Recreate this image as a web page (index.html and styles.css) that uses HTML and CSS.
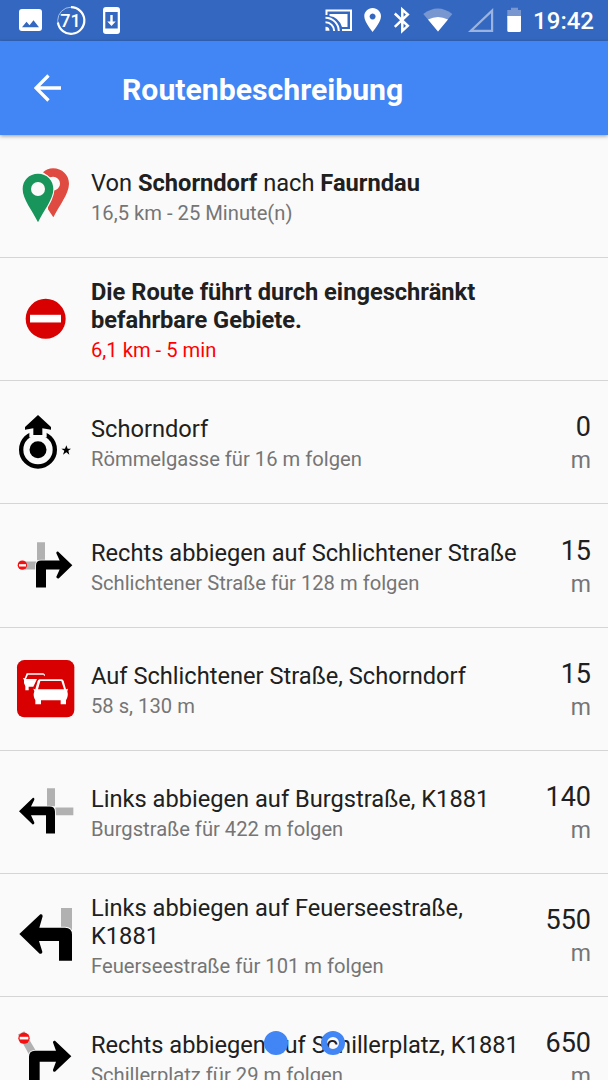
FILE: index.html
```html
<!DOCTYPE html>
<html lang="de">
<head>
<meta charset="utf-8">
<title>Routenbeschreibung</title>
<link rel="stylesheet" href="styles.css">
</head>
<body>
<div class="screen">
  <header class="statusbar">
    <svg class="status-icons" viewBox="0 0 130 41">
      <path fill="#fff" fill-rule="evenodd" d="M22 9h17q3 0 3 3v16q0 3-3 3H22q-3 0-3-3V12q0-3 3-3zM22 27.300h17l-5.500-7-4 5-3-3.500z"/>
      <circle cx="71" cy="20.500" r="13.300" fill="none" stroke="#a5bee6" stroke-width="1"/>
      <path fill="none" stroke="#fff" stroke-width="2.200" d="M71 7.200A13.300 13.300 0 1 1 57.900 22.500"/>
      <text class="status-count" x="70.500" y="27" text-anchor="middle">71</text>
      <path fill="#fff" fill-rule="evenodd" d="M106 7h11q3 0 3 3v21q0 3-3 3h-11q-3 0-3-3V10q0-3 3-3zM105.300 12v16.500h12.400V12zM110.300 15h2.400v6.500h3l-4.200 4.500-4.200-4.500h3z"/>
    </svg>
    <div class="status-right">
      <svg class="status-icons" viewBox="304 0 226 41">
        <g fill="none" stroke="#fff" stroke-width="2">
          <path d="M326.500 15v-4.500h24.500v19.500h-9"/>
          <path d="M325.500 17.700a13.500 13.500 0 0 1 13.300 13.300M325.500 22.300a8.700 8.700 0 0 1 8.700 8.700"/>
        </g>
        <path fill="#fff" d="M329.500 14h18v13h-5.500q-3.500-10-12.500-11zM325.500 26.800a4 4 0 0 1 4 4h-4z"/>
        <path fill="#fff" fill-rule="evenodd" d="M372.600 8c4.800 0 8.400 3.700 8.400 8.300 0 6-8.400 15.700-8.400 15.700s-8.300-9.700-8.300-15.700c0-4.600 3.600-8.300 8.300-8.300zM372.600 13.400a3 3 0 1 0 .01 0z"/>
        <path fill="none" stroke="#fff" stroke-width="2.500" d="M394.800 13.500l13 12.300-5.500 5V9.500l5.500 5-13 12.300"/>
        <path fill="#7897d1" d="M423.300 14q14.500-11 29 0L438 31.500z"/>
        <path fill="#fff" d="M428 19.500q10-5 20 0L438 31.500z"/>
        <path fill="#9ab3e0" fill-rule="evenodd" d="M493.200 8v24H468zM491 13.200l-17.500 16.600h17.500z"/>
        <path fill="#7897d1" d="M507.300 10h3.700V7.800h7V10h3v8h-13.700z"/>
        <path fill="#fff" d="M507.300 16H521v14.500q0 1.500-1.500 1.500h-10.700q-1.500 0-1.500-1.500z"/>
      </svg>
      <span class="clock">19:42</span>
    </div>
  </header>
  <div class="appbar">
    <svg class="back" viewBox="0 0 28 28"><path d="M27 14H2.500M14.500 1.500L2 14l12.500 12.500"/></svg>
    <h1 class="heading">Routenbeschreibung</h1>
  </div>
  <main class="list">
    <section class="row">
      <svg class="icon" viewBox="0 -45 273 366">
        <path fill="#e04b41" fill-rule="evenodd" d="M159 55c27 0 48 20 48 46 0 30-29 65-47 101l-16-24 0-100-15-11q13-12 30-12zM159 80a21 21 0 1 0 .1 42a21 21 0 0 0 0-42z"/>
        <path fill="#18955a" stroke="#fafafa" stroke-width="7" paint-order="stroke" d="M114 71c-27 0-46 20-46 46 0 31 28 63 46 100 18-37 46-69 46-100 0-26-19-46-46-46z"/>
        <circle cx="114" cy="117" r="21" fill="#fafafa"/>
      </svg>
      <div class="text"><div class="title">Von <b>Schorndorf</b> nach <b>Faurndau</b></div><div class="detail">16,5 km - 25 Minute(n)</div></div>
    </section>
    <section class="row">
      <svg class="icon" viewBox="0 324.600 273 366">
        <circle cx="137" cy="507" r="60" fill="#d80000"/><path fill="#fff" d="M90 495h93v23H90z"/>
      </svg>
      <div class="text"><div class="title"><b>Die Route führt durch eingeschränkt befahrbare Gebiete.</b></div><div class="detail warning">6,1 km - 5 min</div></div>
    </section>
    <section class="row">
      <svg class="icon" viewBox="0 -56 273 366">
        <circle cx="114" cy="150" r="50.500" fill="none" stroke="#000" stroke-width="13"/>
        <path fill="#fafafa" d="M88 86h52v27H88z"/>
        <circle cx="114" cy="150" r="25.500"/>
        <path d="M114 46l39 36v8l-26-4v20h-27V86l-25 4v-8z"/>
        <path d="M199 137l4 10h10l-8 6 3 12-9-7-10 7 4-12-9-6h11z"/>
      </svg>
      <div class="text"><div class="title">Schorndorf</div><div class="detail">Römmelgasse für 16 m folgen</div></div>
      <div class="distance"><div class="value">0</div><div class="unit">m</div></div>
    </section>
    <section class="row">
      <svg class="icon" viewBox="0 -61.500 273 366">
        <path fill="#b1b1b1" d="M111 50h24v54h-24zM75 108h34v24H75z"/>
        <path stroke="#fafafa" stroke-width="5" paint-order="stroke" d="M108 186v-66q0-15 15-15h56l-10-22q-1-6 5-5l43 41-41 40q-7 1-7-5l10-22h-41v54z"/>
        <circle cx="67" cy="119" r="14" fill="#f41010"/><path fill="#fff" d="M57 116h21v7H57z"/>
      </svg>
      <div class="text"><div class="title">Rechts abbiegen auf Schlichtener Straße</div><div class="detail">Schlichtener Straße für 128 m folgen</div></div>
      <div class="distance"><div class="value">15</div><div class="unit">m</div></div>
    </section>
    <section class="row">
      <svg class="icon" viewBox="0 -52 273 366">
        <rect x="51" y="44" width="172" height="172" rx="22" fill="#d80000"/>
        <path fill="#fff" fill-rule="evenodd" d="M80 84h50q6 2 5 9l-4-3v-2H84l-6 13h33l-11 23H86v11H76v-12q-6-8-4-19l-3-6 5 1z"/>
        <path fill="#fff" fill-rule="evenodd" d="M119 102h66q4 0 6 5l7 25 6-2-2 8q4 14-4 27v12h-16v-12h-59v12h-17v-12q-8-13-3-27l-3-8 6 2 7-25q2-5 6-5zM121 107l-7 25h78l-8-25z"/>
      </svg>
      <div class="text"><div class="title">Auf Schlichtener Straße, Schorndorf</div><div class="detail">58 s, 130 m</div></div>
      <div class="distance"><div class="value">15</div><div class="unit">m</div></div>
    </section>
    <section class="row">
      <svg class="icon" viewBox="0 -57.600 273 366">
        <path fill="#b1b1b1" d="M141 54h24v54h-24zM166 112h54v23h-54z"/>
        <path stroke="#fafafa" stroke-width="5" paint-order="stroke" d="M165 190v-65q0-16-16-16H93l10-20q1-7-4-6l-42 40 41 40q6 0 5-6l-10-22h45v55z"/>
      </svg>
      <div class="text"><div class="title">Links abbiegen auf Burgstraße, K1881</div><div class="detail">Burgstraße für 422 m folgen</div></div>
      <div class="distance"><div class="value">140</div><div class="unit">m</div></div>
    </section>
    <section class="row">
      <svg class="icon" viewBox="0 -48 273 366">
        <path fill="#b1b1b1" d="M183 54h33v66h-33z"/>
        <path stroke="#fafafa" stroke-width="5" paint-order="stroke" d="M216 212v-78q0-21-21-21h-77l10-34q0-8-7-6l-63 59 61 59q9 2 8-6l-10-32h60v59z"/>
      </svg>
      <div class="text"><div class="title">Links abbiegen auf Feuerseestraße, K1881</div><div class="detail">Feuerseestraße für 101 m folgen</div></div>
      <div class="distance"><div class="value">550</div><div class="unit">m</div></div>
    </section>
    <section class="row">
      <svg class="icon" viewBox="0 -38.400 273 366">
        <path fill="#b1b1b1" d="M54 74l19-10 34 58-20 12z"/>
        <path stroke="#fafafa" stroke-width="5" paint-order="stroke" d="M87 240v-99q0-18 18-18h63l-9-25q0-7 6-5l49 46-49 47q-7 1-6-6l9-24h-49v84z"/>
        <circle cx="72" cy="85" r="17" fill="#f41010"/><path fill="#fff" d="M59 81h26v8H59z"/>
      </svg>
      <div class="text"><div class="title">Rechts abbiegen auf Schillerplatz, K1881</div><div class="detail">Schillerplatz für 29 m folgen</div></div>
      <div class="distance"><div class="value">650</div><div class="unit">m</div></div>
    </section>
  </main>
  <div class="pager"><span class="dot active"></span><span class="dot"></span></div>
</div>
</body>
</html>
```
FILE: styles.css
```css
* { box-sizing: border-box; }
body { margin: 0; background: #fafafa; font-family: Roboto, "Liberation Sans", sans-serif; color: #202020; }
.screen { position: relative; width: 608px; height: 1080px; overflow: hidden; }
.statusbar { display: flex; justify-content: space-between; height: 41px; background: #3468c0; color: #fff; }
.status-icons { display: block; height: 41px; }
.status-count { fill: #fff; font-size: 18px; font-weight: 500; }
.status-right { display: flex; padding-right: 14px; }
.clock { width: 64px; text-align: right; white-space: nowrap; font-size: 24px; font-weight: 500; line-height: 43px; }
.appbar { position: relative; z-index: 1; display: flex; align-items: center; height: 94px; padding-left: 34px; background: #4285f4; color: #fff; box-shadow: 0 1px 4px rgba(0,0,0,.4); }
.back { width: 28px; height: 28px; fill: none; stroke: #fff; stroke-width: 3.3; }
.heading { margin: 3px 0 0 60px; font-size: 30.2px; font-weight: 700; line-height: 36px; white-space: nowrap; }
.row { display: flex; align-items: center; height: 123.17px; padding-right: 17px; border-bottom: 1px solid #d5d5d5; }
.icon { flex: none; width: 91px; height: 122px; }
.text { flex: 1; min-width: 0; padding: 2px 20px 0 0; }
.title { font-size: 23.65px; line-height: 28px; }
.title b { font-weight: 700; }
.detail { margin-top: 4px; font-size: 20.2px; line-height: 24px; color: #757575; white-space: nowrap; }
.warning { color: #f00; }
.distance { flex: none; padding-top: 5px; text-align: right; }
.value { font-size: 27px; line-height: 33px; }
.unit { font-size: 23px; line-height: 34px; color: #757575; }
.pager { position: absolute; left: 263.5px; top: 1031px; display: flex; gap: 33.5px; }
.dot { width: 24px; height: 24px; border: 6px solid #4285f4; border-radius: 50%; }
.active { background: #4285f4; }
```
